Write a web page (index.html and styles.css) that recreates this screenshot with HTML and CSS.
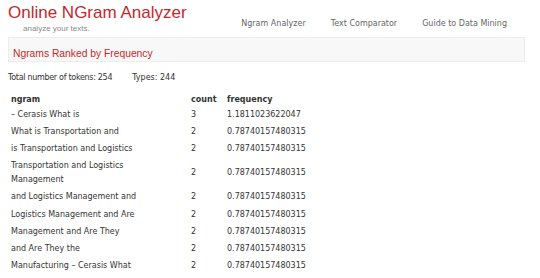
FILE: index.html
```html
<!DOCTYPE html>
<html lang="en">
<head>
    <meta charset="UTF-8">
    <meta name="viewport" content="width=device-width, initial-scale=1.0">
    <title>Online NGram Analyzer</title>
    <link rel="stylesheet" href="styles.css">
</head>
<body>
    <div class="page">
        <div class="header">
            <div class="brand">
                <h1>Online NGram Analyzer</h1>
                <div class="tagline">analyze your texts.</div>
            </div>
            <ul class="nav">
                <li><a href="#">Ngram Analyzer</a></li>
                <li><a href="#">Text Comparator</a></li>
                <li><a href="#">Guide to Data Mining</a></li>
            </ul>
        </div>

        <div class="section-title">Ngrams Ranked by Frequency</div>

        <p class="summary"><span class="tokens">Total number of tokens: 254</span><span class="types">Types: 244</span></p>

        <table class="ngrams">
            <thead>
                <tr>
                    <th class="col-ngram">ngram</th>
                    <th class="col-count">count</th>
                    <th>frequency</th>
                </tr>
            </thead>
            <tbody>
                <tr><td>– Cerasis What is</td><td>3</td><td>1.1811023622047</td></tr>
                <tr><td>What is Transportation and</td><td>2</td><td>0.78740157480315</td></tr>
                <tr><td>is Transportation and Logistics</td><td>2</td><td>0.78740157480315</td></tr>
                <tr><td>Transportation and Logistics Management</td><td>2</td><td>0.78740157480315</td></tr>
                <tr><td>and Logistics Management and</td><td>2</td><td>0.78740157480315</td></tr>
                <tr><td>Logistics Management and Are</td><td>2</td><td>0.78740157480315</td></tr>
                <tr><td>Management and Are They</td><td>2</td><td>0.78740157480315</td></tr>
                <tr><td>and Are They the</td><td>2</td><td>0.78740157480315</td></tr>
                <tr><td>Manufacturing – Cerasis What</td><td>2</td><td>0.78740157480315</td></tr>
            </tbody>
        </table>
    </div>
</body>
</html>
```

FILE: styles.css
```css
body {
    margin: 0;
    font-family: "DejaVu Sans", Verdana, sans-serif;
    font-size: 8px;
    color: #333;
    background: #fff;
}
.page {
    width: 517px;
    margin-left: 8px;
}
.header {
    display: flex;
    justify-content: space-between;
    align-items: flex-start;
    height: 37px;
}
.brand h1 {
    margin: 0;
    padding-top: 2px;
    font-family: "Liberation Sans", Arial, sans-serif;
    font-size: 17px;
    font-weight: normal;
    line-height: 21px;
    color: #c4282c;
}
.tagline {
    margin-left: 15px;
    padding-top: 1px;
    font-family: "Liberation Sans", Arial, sans-serif;
    font-size: 8px;
    line-height: 10px;
    color: #8a8a8a;
}
.nav {
    display: flex;
    gap: 25px;
    list-style: none;
    margin: 0;
    padding: 18px 18px 0 0;
    line-height: 12px;
}
.nav a {
    color: #666;
    text-decoration: none;
}
.section-title {
    border: 1px solid #ececec;
    background-color: #f8f8f8;
    padding: 10px 4px 2px;
    font-family: "Liberation Sans", Arial, sans-serif;
    font-size: 10.3px;
    line-height: 11px;
    color: #c4282c;
}
.summary {
    display: flex;
    align-items: baseline;
    margin: 10px 0 0;
    line-height: 12px;
}
.tokens {
    letter-spacing: -0.3px;
}
.types {
    margin-left: 20px;
}
.ngrams {
    width: 310px;
    margin-top: 10px;
    border-collapse: collapse;
    table-layout: fixed;
}
.ngrams th {
    text-align: left;
    font-weight: bold;
    padding: 0 3px;
    line-height: 12px;
}
.ngrams td {
    padding: 1.6px 3px;
    line-height: 14px;
    vertical-align: middle;
    color: #333;
}
.ngrams td:first-child {
    padding-right: 36px;
}
.col-ngram {
    width: 174px;
}
.col-count {
    width: 30px;
}
```
